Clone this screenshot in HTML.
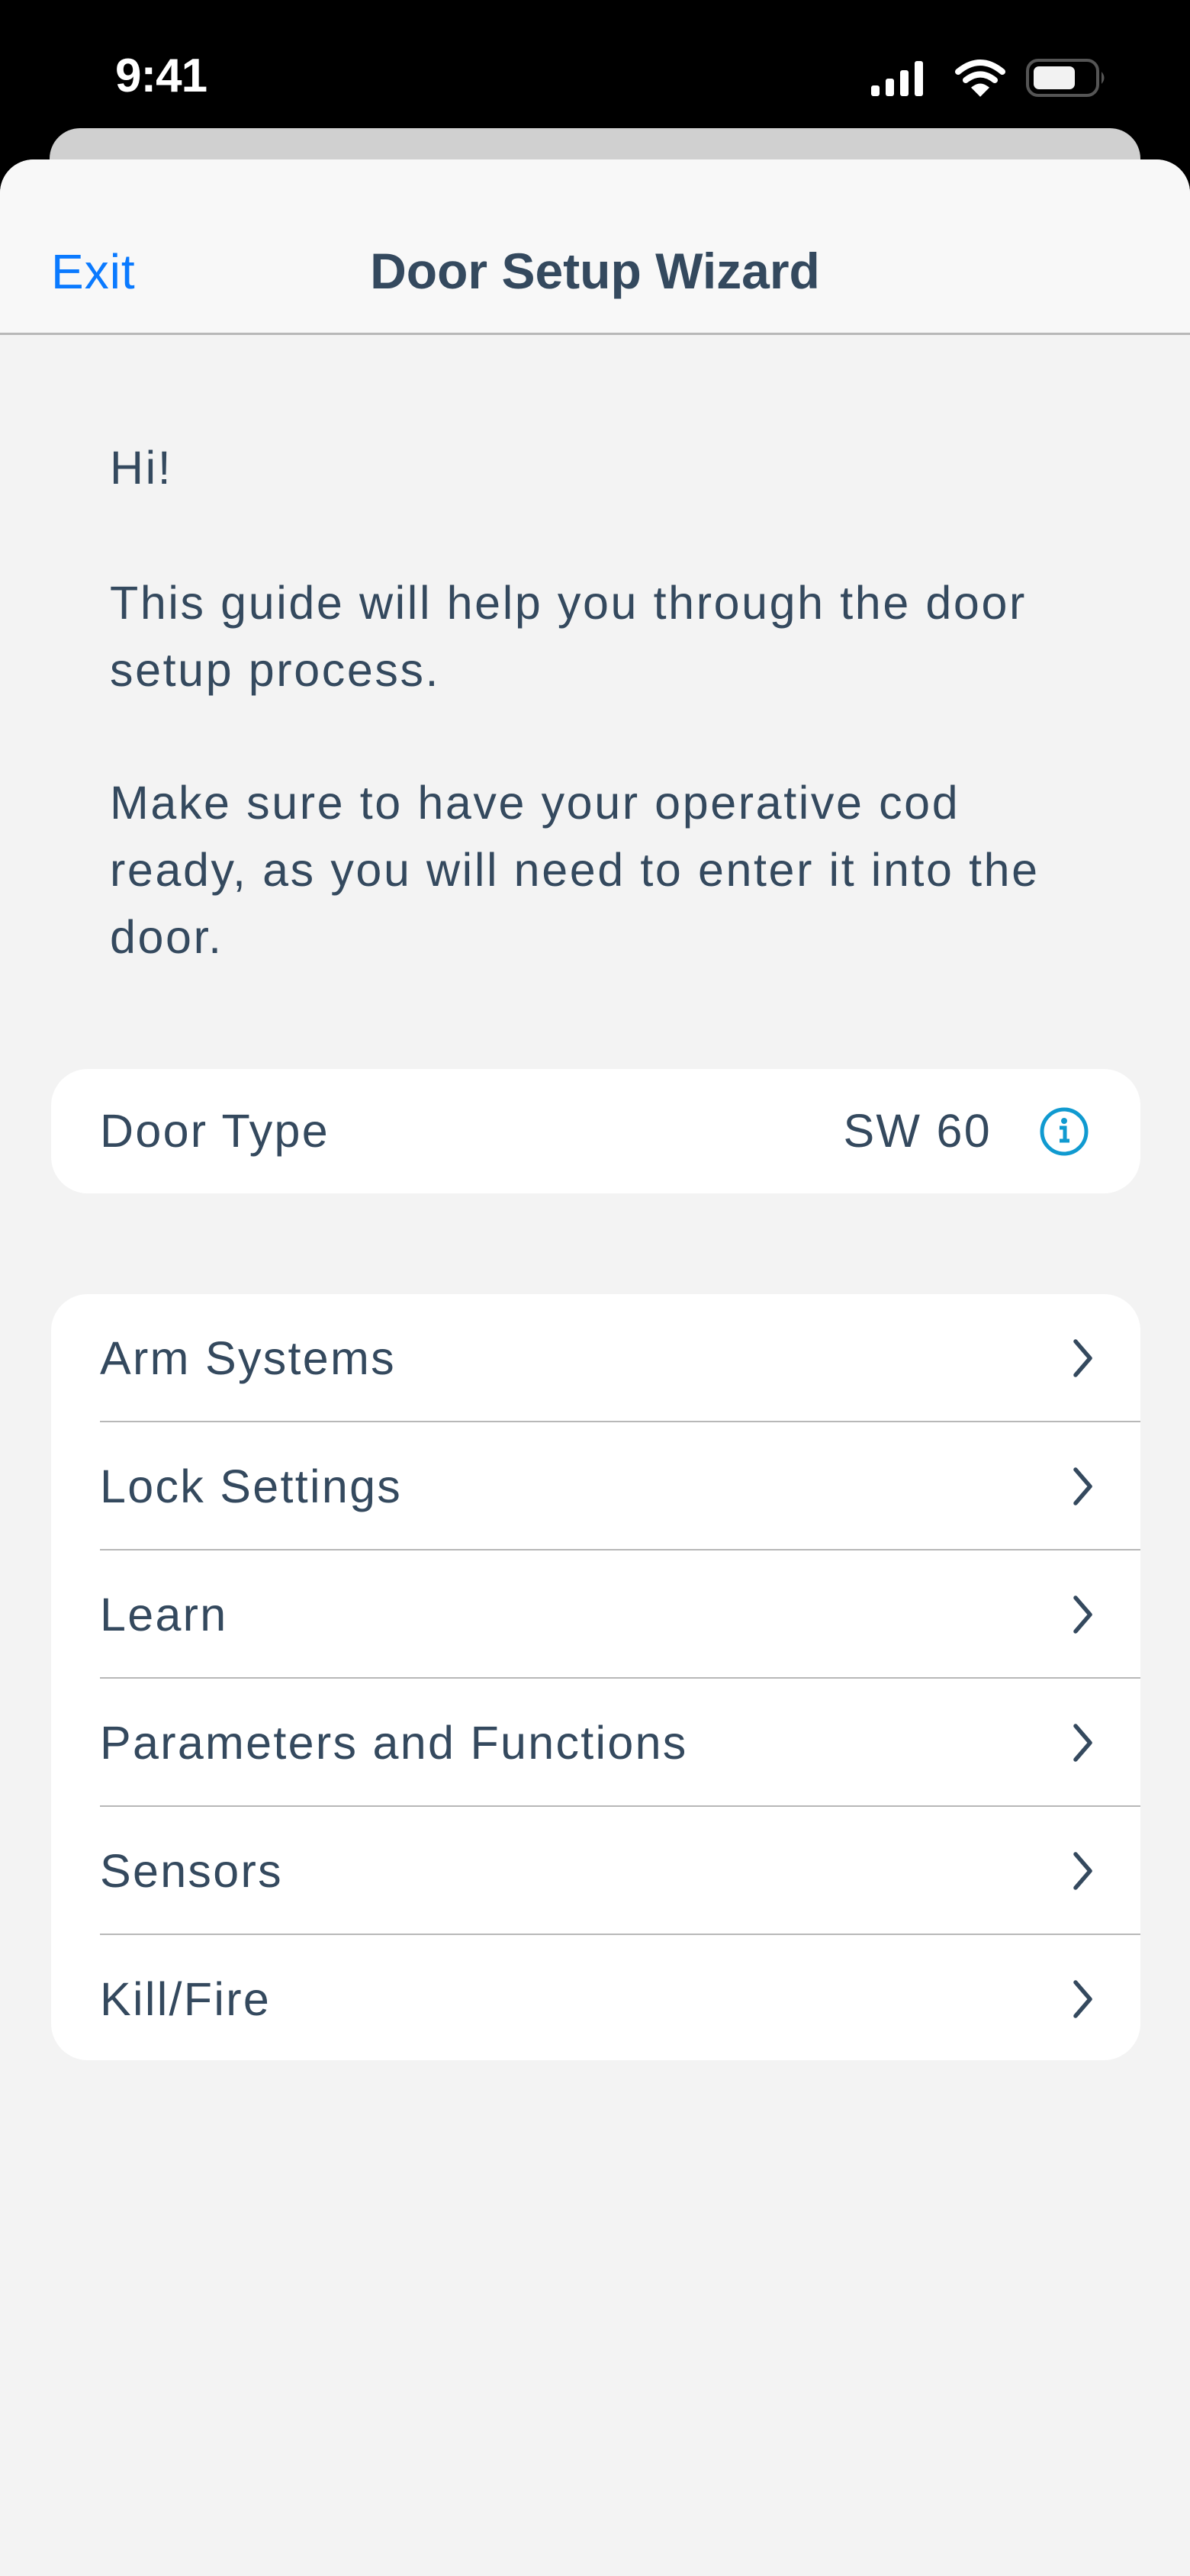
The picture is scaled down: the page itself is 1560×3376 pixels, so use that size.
<!DOCTYPE html>
<html><head><meta charset="utf-8"><style>
*{margin:0;padding:0;box-sizing:border-box}
body{width:1560px;height:3376px;background:#000;position:relative;overflow:hidden;font-family:"Liberation Sans",sans-serif;color:#34495e}
.time{position:absolute;left:151px;top:64px;color:#fff;font-size:62px;font-weight:bold;letter-spacing:-1px}
.back{position:absolute;left:65px;top:168px;width:1430px;height:100px;background:#d0d0d0;border-radius:40px 40px 0 0}
.sheet{position:absolute;left:0;top:209px;width:1560px;height:3167px;background:#f3f3f3;border-radius:44px 44px 0 0;overflow:hidden}
.hdr{height:230px;background:#f8f8f8;border-bottom:3px solid #b8b8b8;position:relative}
.exit{position:absolute;left:67px;top:110px;font-size:64px;color:#0a7aff;letter-spacing:1px}
.title{position:absolute;left:0;right:0;text-align:center;top:108px;font-size:66px;font-weight:bold;color:#34495e}
.txt{position:absolute;left:144px;font-size:61px;line-height:88px;letter-spacing:2.6px;white-space:nowrap}
.card{position:absolute;left:67px;width:1428px;background:#fff;border-radius:48px}
.row{height:168px;position:relative;font-size:61px;line-height:168px;padding-left:64px;letter-spacing:2.3px}
.sep{position:absolute;left:64px;right:0;bottom:0;height:2px;background:#b8b8b8}
.chev{position:absolute;right:60px;top:58px}
</style></head><body>
<div class="time">9:41</div>
<svg style="position:absolute;left:1140px;top:78px" width="80" height="50"><rect x="2" y="34" width="11" height="14" rx="3" fill="#fff"/><rect x="21" y="25" width="11" height="23" rx="3" fill="#fff"/><rect x="40" y="14" width="11" height="34" rx="3" fill="#fff"/><rect x="59" y="2" width="11" height="46" rx="3" fill="#fff"/></svg>
<svg style="position:absolute;left:1250px;top:78px" width="70" height="50" fill="none" stroke="#fff" stroke-width="8" stroke-linecap="round"><path d="M6 16 Q35 -8 64 16"/><path d="M16 27 Q35 12 54 27"/><path d="M35 46 L26 37 Q35 30 44 37 Z" fill="#fff" stroke-width="4"/></svg>
<svg style="position:absolute;left:1344px;top:76px" width="112" height="54"><rect x="3" y="3" width="92" height="46" rx="14" fill="none" stroke="#555" stroke-width="4"/><rect x="11" y="11" width="54" height="30" rx="7" fill="#f2f2f2"/><path d="M100 18 Q107 26 100 34" fill="#555"/></svg>
<div class="back"></div>
<div class="sheet">
 <div class="hdr"><div class="exit">Exit</div><div class="title">Door Setup Wizard</div></div>
 <div class="txt" style="top:360px">Hi!</div>
 <div class="txt" style="top:537px">This guide will help you through the door<br>setup process.</div>
 <div class="txt" style="top:799px">Make sure to have your operative cod<br>ready, as you will need to enter it into the<br>door.</div>
 <div class="card" style="top:1192px;height:163px">
  <div class="row" style="height:163px;line-height:163px">Door Type
   <span style="position:absolute;right:195px">SW 60</span>
   <svg style="position:absolute;left:1295px;top:49px" width="66" height="66"><circle cx="33" cy="33" r="29" fill="none" stroke="#109ad0" stroke-width="5"/><circle cx="33" cy="19" r="4" fill="#109ad0"/><path d="M27 28h7v17M27 45h13" stroke="#109ad0" stroke-width="5" fill="none"/></svg>
  </div>
 </div>
 <div class="card" style="top:1487px;height:1004px">
  <div class="row">Arm Systems<div class="sep"></div><svg class="chev" width="30" height="52"><path d="M5 4 L24 26 L5 48" fill="none" stroke="#34495e" stroke-width="5.5" stroke-linecap="round" stroke-linejoin="round"/></svg></div>
  <div class="row">Lock Settings<div class="sep"></div><svg class="chev" width="30" height="52"><path d="M5 4 L24 26 L5 48" fill="none" stroke="#34495e" stroke-width="5.5" stroke-linecap="round" stroke-linejoin="round"/></svg></div>
  <div class="row">Learn<div class="sep"></div><svg class="chev" width="30" height="52"><path d="M5 4 L24 26 L5 48" fill="none" stroke="#34495e" stroke-width="5.5" stroke-linecap="round" stroke-linejoin="round"/></svg></div>
  <div class="row">Parameters and Functions<div class="sep"></div><svg class="chev" width="30" height="52"><path d="M5 4 L24 26 L5 48" fill="none" stroke="#34495e" stroke-width="5.5" stroke-linecap="round" stroke-linejoin="round"/></svg></div>
  <div class="row">Sensors<div class="sep"></div><svg class="chev" width="30" height="52"><path d="M5 4 L24 26 L5 48" fill="none" stroke="#34495e" stroke-width="5.5" stroke-linecap="round" stroke-linejoin="round"/></svg></div>
  <div class="row">Kill/Fire<svg class="chev" width="30" height="52"><path d="M5 4 L24 26 L5 48" fill="none" stroke="#34495e" stroke-width="5.5" stroke-linecap="round" stroke-linejoin="round"/></svg></div>
 </div>
</div>
</body></html>
